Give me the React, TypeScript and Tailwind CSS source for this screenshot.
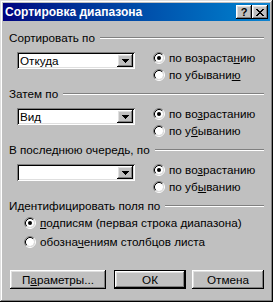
import type { ReactNode } from "react";

const raised =
	"bg-[#c0c0c0] shadow-[inset_-1px_-1px_#000,inset_1px_1px_#fff,inset_-2px_-2px_#808080,inset_2px_2px_#dfdfdf]";
const sunken =
	"shadow-[inset_1px_1px_#808080,inset_-1px_-1px_#fff,inset_2px_2px_#000,inset_-2px_-2px_#dfdfdf]";

function Radio({ checked }: { checked?: boolean }) {
	return (
		<svg width="12" height="12" viewBox="0 0 12 12" className="shrink-0">
			<circle cx="6" cy="6" r="4" fill="#fff" />
			<path d="M2.11 9.89 A5.5 5.5 0 0 1 9.89 2.11" stroke="#808080" fill="none" />
			<path d="M9.89 2.11 A5.5 5.5 0 0 1 2.11 9.89" stroke="#fff" fill="none" />
			<path d="M2.82 9.18 A4.5 4.5 0 0 1 9.18 2.82" stroke="#000" fill="none" />
			<path d="M9.18 2.82 A4.5 4.5 0 0 1 2.82 9.18" stroke="#dfdfdf" fill="none" />
			{checked ? <circle cx="6" cy="6" r="2" fill="#000" /> : null}
		</svg>
	);
}

function Option({ checked, children, h = "h-[17px]" }: { checked?: boolean; children: ReactNode; h?: string }) {
	return (
		<div className={`flex items-center gap-[4px] ${h}`}>
			<Radio checked={checked} />
			<span className="whitespace-nowrap">{children}</span>
		</div>
	);
}

function Header({ title }: { title: string }) {
	return (
		<div className="flex items-center h-[13px]">
			<span className="whitespace-nowrap pr-[5px]">{title}</span>
			<div className="flex-1 h-[2px] border-t border-[#808080] border-b border-b-white" />
		</div>
	);
}

function Combo({ value }: { value: string }) {
	return (
		<div className={`relative w-[118px] h-[17px] bg-white ${sunken} flex items-center pl-[3px]`}>
			<span>{value}</span>
			<div className={`absolute right-[2px] top-[2px] w-[16px] h-[13px] ${raised} flex items-center justify-center`}>
				<svg width="7" height="4" viewBox="0 0 7 4" shapeRendering="crispEdges">
					<rect x="0" y="0" width="7" height="1" />
					<rect x="1" y="1" width="5" height="1" />
					<rect x="2" y="2" width="3" height="1" />
					<rect x="3" y="3" width="1" height="1" />
				</svg>
			</div>
		</div>
	);
}

function Section({ title, value, up, down }: { title: string; value: string; up: ReactNode; down: ReactNode }) {
	return (
		<div>
			<Header title={title} />
			<div className="flex mt-[5px]">
				<div className="ml-[8px] mt-[3px]">
					<Combo value={value} />
				</div>
				<div className="ml-[18px] flex flex-col">
					<Option checked>{up}</Option>
					<Option>{down}</Option>
				</div>
			</div>
		</div>
	);
}

export default function App() {
	return (
		<div className="w-[273px] h-[302px] bg-[#c0c0c0] p-[3px] flex flex-col text-[11.7px] leading-[13px] text-black font-['Liberation_Sans',Arial,sans-serif] shadow-[inset_-1px_-1px_#000,inset_1px_1px_#dfdfdf,inset_-2px_-2px_#808080,inset_2px_2px_#fff]">
			<div className="h-[18px] bg-gradient-to-r from-[#000080] to-[#1084d0] flex items-center pl-[2px] pr-[2px]">
				<span className="text-white font-bold text-[12px] flex-1">Сортировка диапазона</span>
				<div className={`w-[16px] h-[14px] ${raised} flex items-center justify-center font-bold text-[11px]`}>?</div>
				<div className={`w-[16px] h-[14px] ${raised} flex items-center justify-center`}>
					<svg width="8" height="7" viewBox="0 0 8 7" shapeRendering="crispEdges">
						<path d="M0 0h2v1H0zM6 0h2v1H6zM1 1h2v1H1zM5 1h2v1H5zM2 2h4v1H2zM3 3h2v1H3zM2 4h4v1H2zM1 5h2v1H1zM5 5h2v1H5zM0 6h2v1H0zM6 6h2v1H6z" />
					</svg>
				</div>
			</div>

			<div className="flex flex-col pl-[6px] pr-[6px] pt-[10px] gap-[4px]">
				<Section
					title="Сортировать по"
					value="Откуда"
					up={<>по возраста<u>н</u>ию</>}
					down={<>по убывани<u>ю</u></>}
				/>
				<Section
					title="Затем по"
					value="Вид"
					up={<>по во<u>з</u>растанию</>}
					down={<>по у<u>б</u>ыванию</>}
				/>
				<Section
					title="В последнюю очередь, по"
					value=""
					up={<>по во<u>з</u>растанию</>}
					down={<>по уб<u>ы</u>ванию</>}
				/>
				<div>
					<Header title="Идентифицировать поля по" />
					<div className="flex flex-col ml-[15px] mt-[1px]">
						<Option checked h="h-[19px]">
							<u>п</u>одписям (первая строка диапазона)
						</Option>
						<Option h="h-[19px]">
							обозна<u>ч</u>ениям столбцов листа
						</Option>
					</div>
				</div>
			</div>

			<div className="flex mt-[19px] pl-[7px]">
				<div className={`w-[96px] h-[19px] ${raised} flex items-center justify-center`}>
					П<u>а</u>раметры...
				</div>
				<div className="ml-[8px] w-[72px] h-[19px] border border-black">
					<div className={`w-full h-full ${raised} flex items-center justify-center`}>ОК</div>
				</div>
				<div className={`ml-[6px] w-[72px] h-[19px] ${raised} flex items-center justify-center`}>Отмена</div>
			</div>
		</div>
	);
}
